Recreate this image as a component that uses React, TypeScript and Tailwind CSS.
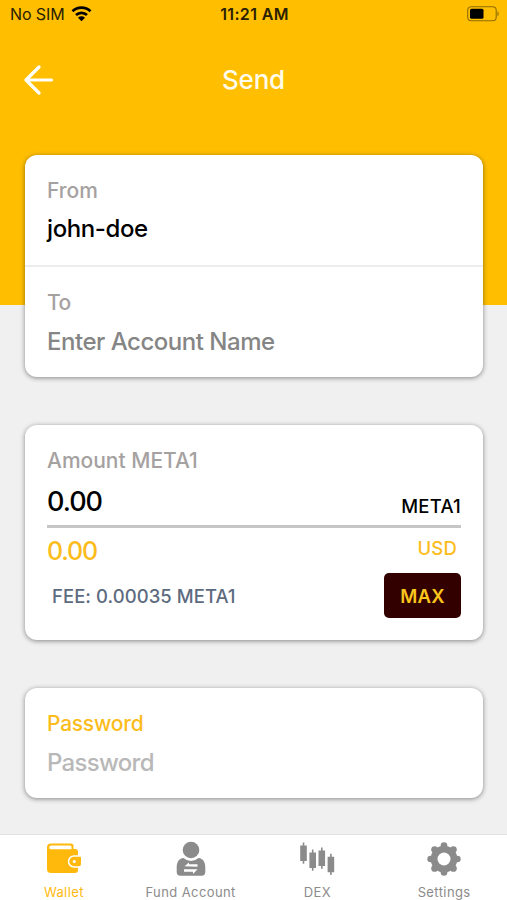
import { useState } from 'react'

const tabs = [
  { name: 'Wallet', icon: WalletIcon },
  { name: 'Fund Account', icon: FundIcon },
  { name: 'DEX', icon: DexIcon },
  { name: 'Settings', icon: SettingsIcon },
]

function WalletIcon() {
  return (
    <svg width="36" height="36" viewBox="0 0 36 36">
      <path
        fill="currentColor"
        fillRule="evenodd"
        d="M5 2.500h20a2.500 2.500 0 0 1 2.500 2.500V8h1.500a3 3 0 0 1 3 3v3.300h-4a6.200 6.200 0 0 0 0 12.400h4v2.300a3 3 0 0 1-3 3H5a4 4 0 0 1-4-4V6.500a4 4 0 0 1 4-4zM5.200 4.500a1.900 1.900 0 0 0 0 3.800H25.500V6A1.500 1.500 0 0 0 24 4.500z"
      />
      <path
        fill="currentColor"
        fillRule="evenodd"
        d="M28 15.800H34a1 1 0 0 1 1 1V23a2.200 2.200 0 0 1-2.200 2.200H28a4.700 4.700 0 0 1 0-9.400zm.3 3.100a1.600 1.600 0 1 0 0 3.200 1.600 1.600 0 0 0 0-3.200z"
      />
    </svg>
  )
}

function FundIcon() {
  return (
    <svg width="36" height="36" viewBox="0 0 36 36">
      <circle cx="18" cy="9" r="8.300" fill="currentColor" />
      <path
        fill="currentColor"
        d="M10.500 17a11 11 0 0 0 15 0c4.500.5 6.800 4 6.800 9.300v4.500c0 2.500-1.200 4-3.700 4H7.400c-2.500 0-3.700-1.500-3.700-4v-4.500c0-5.300 2.300-8.800 6.800-9.300z"
      />
      <path fill="#fff" d="M11.500 25.200l4.500-3.600v1.700h8.500v2.400zM24.500 28.200l-4.500 4.800v-2.200h-9v-2.600z" />
    </svg>
  )
}

function DexIcon() {
  return (
    <svg width="36" height="36" viewBox="0 0 36 36" fill="currentColor">
      <path d="M3.700 1.500h1.600v3h2.500v15.500h-2.500v2.800h-1.600V20H1.200V4.500h2.500z" />
      <path d="M12.900 8.500h1.600v3H17V27h-2.500v2.800h-1.600V27h-2.500V11.500h2.500z" />
      <path d="M22 6.500h1.600v3h2.500V25h-2.500v2.800H22V25h-2.500V9.500H22z" />
      <path d="M31.100 12.800h1.600v3h2.500v15.500h-2.500V34h-1.600v-2.700h-2.500V15.800h2.500z" />
    </svg>
  )
}

function SettingsIcon() {
  return (
    <svg width="36" height="36" viewBox="0 0 36 36" fill="currentColor">
      <circle cx="18" cy="18" r="13.300" />
      <circle cx="18" cy="4.600" r="3.300" />
      <circle cx="18" cy="31.400" r="3.300" />
      <circle cx="4.600" cy="18" r="3.300" />
      <circle cx="31.400" cy="18" r="3.300" />
      <circle cx="8.600" cy="8.600" r="3.400" />
      <circle cx="27.400" cy="8.600" r="3.400" />
      <circle cx="8.600" cy="27.400" r="3.400" />
      <circle cx="27.400" cy="27.400" r="3.400" />
      <circle cx="18" cy="18" r="6.500" fill="#fff" />
    </svg>
  )
}

function StatusBar() {
  return (
    <div className="grid h-[28px] grid-cols-3 items-center pr-[8px] pl-[10px] text-[16px] text-[#2a2003]">
      <div className="flex items-center gap-[6px]">
        <span className="tracking-[-0.1px]">No SIM</span>
        <svg width="21" height="16" viewBox="0 0 21 16" fill="none" stroke="#000" strokeWidth="2.800">
          <path d="M1.500 5.300a13 13 0 0 1 18 0" />
          <path d="M5 9a8 8 0 0 1 11 0" />
          <path d="M10.500 15.300L7 11.800a5 5 0 0 1 7 0z" fill="#000" stroke="none" />
        </svg>
      </div>
      <span className="text-center font-semibold tracking-[0.35px] whitespace-nowrap">11:21 AM</span>
      <svg className="justify-self-end" width="33" height="16" viewBox="0 0 33 16">
        <rect x="1.700" y="0.700" width="28.500" height="14" rx="3.500" fill="none" stroke="#8f6c04" strokeWidth="1.100" />
        <rect x="4" y="2.700" width="13.500" height="10" rx="1.500" fill="#000" />
        <path d="M31.500 5.200v5c1.600-.5 1.600-4.500 0-5z" fill="#8f6c04" />
      </svg>
    </div>
  )
}

export default function App() {
  const [active, setActive] = useState('Wallet')
  const [account, setAccount] = useState('')
  const [password, setPassword] = useState('')

  return (
    <div className="flex h-[900px] w-[507px] flex-col overflow-hidden bg-[#f0f0f0] font-['Inter',sans-serif] text-black">
      {/* Header */}
      <header className="h-[305px] shrink-0 bg-[#ffbf00]">
        <StatusBar />
        <div className="grid grid-cols-3 items-center px-6 pt-[34px]">
          <button aria-label="Back" className="w-[30px] pb-[3px]">
            <svg width="30" height="32" viewBox="0 0 30 32" fill="none" stroke="#fff" strokeWidth="3.200" strokeLinecap="round" strokeLinejoin="round">
              <path d="M15 4L2 17l13 13M2 17H27.500" />
            </svg>
          </button>
          <h1 className="text-center text-[26px] leading-9 font-medium tracking-[-0.2px] text-[#fffbea]">Send</h1>
        </div>
      </header>

      <main className="-mt-[150px] flex flex-1 flex-col pr-[24px] pl-[25px]">
        {/* Accounts */}
        <section className="h-[222px] shrink-0 rounded-[12px] bg-white shadow-[0_1px_5px_rgba(0,0,0,0.45)]">
          <div className="h-[112px] border-b-2 border-[#ececec] px-[22px] pt-[22px]">
            <div className="text-[21px] leading-7 font-[450] text-[#a5a1a1]">From</div>
            <div className="mt-[8px] text-[24px] leading-8 font-medium tracking-[-0.4px]">john-doe</div>
          </div>
          <div className="px-[22px] pt-[22px]">
            <div className="text-[21px] leading-7 font-[450] tracking-[-0.5px] text-[#a5a1a1]">To</div>
            <input
              value={account}
              onChange={(e) => setAccount(e.target.value)}
              className="mt-[9px] block h-8 w-full text-[24px] leading-8 font-[450] tracking-[-0.48px] outline-none placeholder:text-[#858585]"
              placeholder="Enter Account Name"
            />
          </div>
        </section>

        {/* Amount */}
        <section className="mt-12 h-[215px] shrink-0 rounded-[12px] bg-white px-[22px] pt-[22px] shadow-[0_1px_5px_rgba(0,0,0,0.45)]">
          <div className="text-[21px] leading-7 font-[450] text-[#a5a1a1]">Amount META1</div>
          <div className="mt-[9px] flex h-[44px] items-start justify-between border-b-[3px] border-[#c6c6c6]">
            <span className="text-[27px] leading-9 font-medium tracking-[-1px]">0.00</span>
            <span className="pt-[8px] text-[18.5px] leading-7 font-medium tracking-[0.25px]">META1</span>
          </div>
          <div className="mt-[7px] flex items-start justify-between text-[#fbbc1c]">
            <span className="text-[25px] leading-8 font-medium tracking-[-1.2px]">0.00</span>
            <span className="-mt-px pr-1 text-[18.5px] leading-7 font-medium tracking-[0.2px]">USD</span>
          </div>
          <div className="mt-[6px] flex items-center justify-between pl-[5px]">
            <span className="text-[18.5px] leading-7 font-[450] tracking-[0.05px] text-[#5d6b80]">FEE: 0.00035 META1</span>
            <button className="h-[45px] w-[77px] rounded-[5px] bg-[#330000] pt-[2px] text-[18.5px] font-semibold tracking-[0.3px] text-[#fbc51c]">
              MAX
            </button>
          </div>
        </section>

        {/* Password */}
        <section className="mt-12 h-[110px] shrink-0 rounded-[12px] bg-white px-[22px] pt-[22px] shadow-[0_1px_5px_rgba(0,0,0,0.45)]">
          <div className="text-[21px] leading-7 font-medium tracking-[-0.25px] text-[#fbbc1c]">Password</div>
          <input
            type="password"
            value={password}
            onChange={(e) => setPassword(e.target.value)}
            className="mt-[9px] block h-8 w-full text-[24px] leading-8 font-[450] tracking-[-0.7px] outline-none placeholder:text-[#b8b8b8]"
            placeholder="Password"
          />
        </section>
      </main>

      {/* Tabs */}
      <nav className="grid h-[66px] shrink-0 grid-cols-4 border-t border-[#e2e2e2] bg-white">
        {tabs.map((tab) => (
          <button
            key={tab.name}
            onClick={() => setActive(tab.name)}
            className={`flex flex-col items-center pt-[6px] pl-px ${active === tab.name ? 'text-[#ffb90d]' : 'text-[#8b8b8b]'}`}
          >
            <tab.icon />
            <span className="mt-[6px] text-[13px] leading-[18px] tracking-[0.4px] whitespace-nowrap">{tab.name}</span>
          </button>
        ))}
      </nav>
    </div>
  )
}
